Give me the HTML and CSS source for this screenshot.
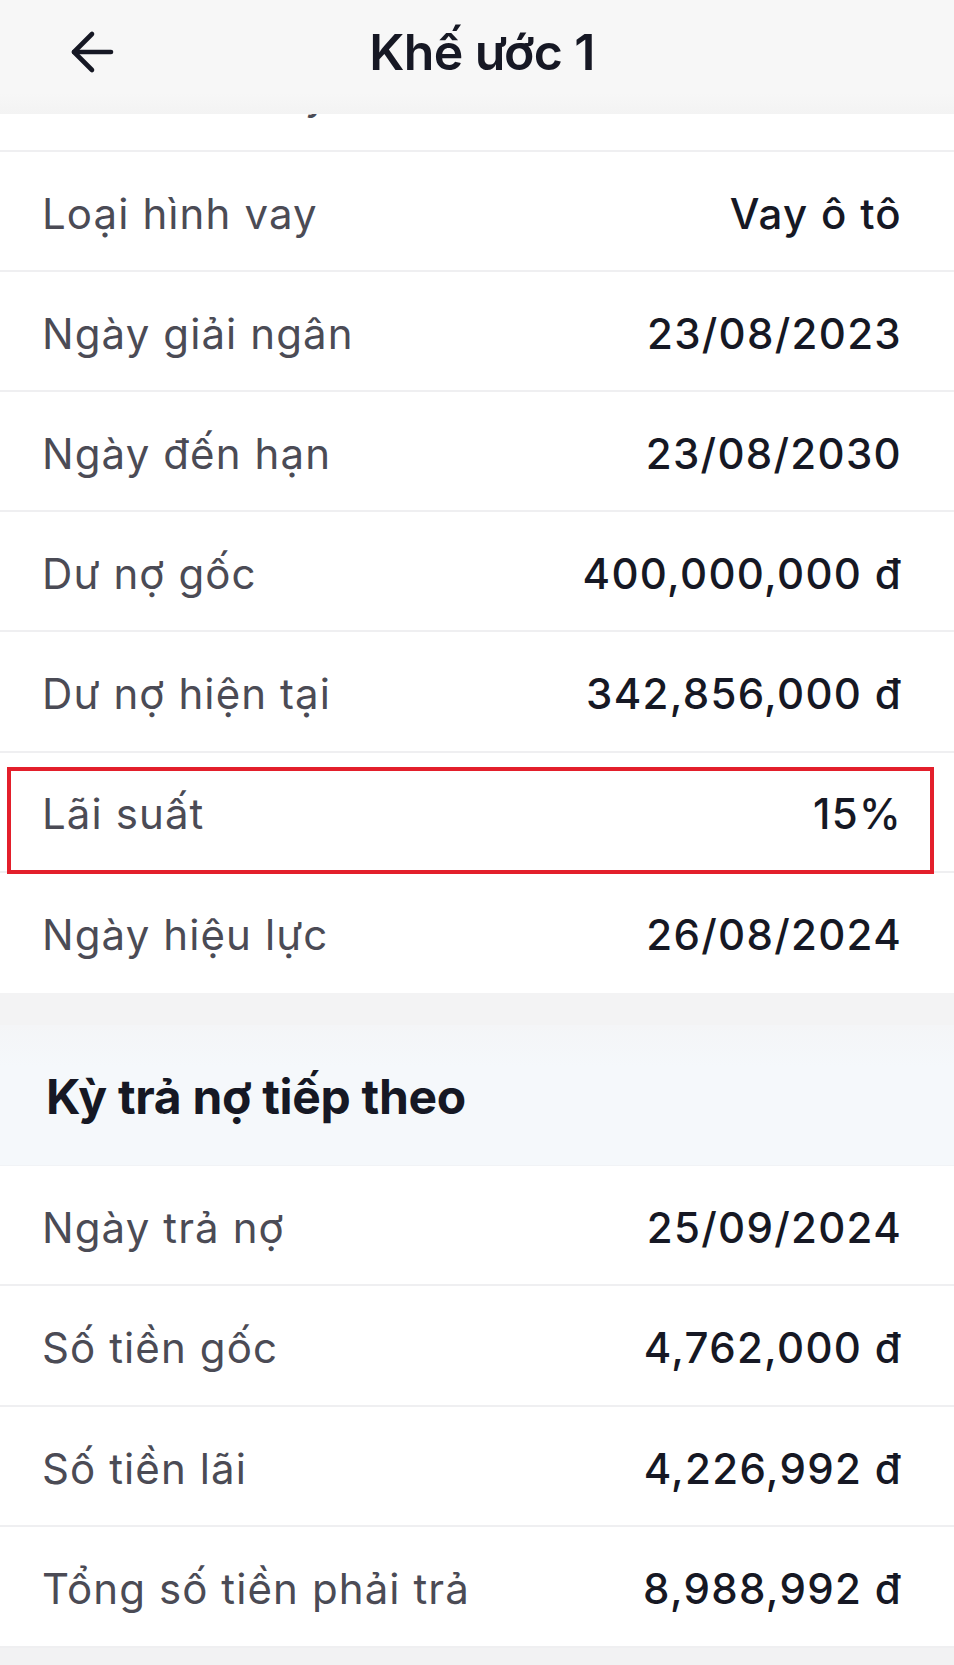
FILE: index.html
```html
<!DOCTYPE html>
<html lang="vi">
<head>
<meta charset="utf-8">
<title>Khế ước 1</title>
<link rel="stylesheet" href="styles.css">
</head>
<body>
<div class="screen">
  <header class="topbar">
    <button class="back" aria-label="Quay lại">
      <svg viewBox="0 0 44 44" width="44" height="44" fill="none" stroke="#161824" stroke-width="4.6" stroke-linecap="round" stroke-linejoin="round">
        <path d="M41 22H4"/>
        <path d="M22 4L4 22L22 40"/>
      </svg>
    </button>
    <h1 class="title">Khế ước 1</h1>
    <span></span>
  </header>

  <main class="viewport">
    <div class="list">
      <section class="group">
        <div class="row"><span class="label">Hình thức vay</span><span class="value">Cá nhân</span></div>
        <div class="row"><span class="label">Loại hình vay</span><span class="value">Vay ô tô</span></div>
        <div class="row"><span class="label">Ngày giải ngân</span><span class="value">23/08/2023</span></div>
        <div class="row"><span class="label">Ngày đến hạn</span><span class="value">23/08/2030</span></div>
        <div class="row"><span class="label">Dư nợ gốc</span><span class="value">400,000,000 đ</span></div>
        <div class="row"><span class="label">Dư nợ hiện tại</span><span class="value">342,856,000 đ</span></div>
        <div class="row marked"><span class="label">Lãi suất</span><span class="value">15%</span><span class="mark"></span></div>
        <div class="row last"><span class="label">Ngày hiệu lực</span><span class="value">26/08/2024</span></div>
      </section>

      <div class="spacer"></div>

      <section class="group next">
        <h2 class="group-title">Kỳ trả nợ tiếp theo</h2>
        <div class="row"><span class="label">Ngày trả nợ</span><span class="value">25/09/2024</span></div>
        <div class="row"><span class="label">Số tiền gốc</span><span class="value">4,762,000 đ</span></div>
        <div class="row"><span class="label">Số tiền lãi</span><span class="value">4,226,992 đ</span></div>
        <div class="row"><span class="label">Tổng số tiền phải trả</span><span class="value">8,988,992 đ</span></div>
      </section>
    </div>
  </main>
</div>
</body>
</html>
```

FILE: styles.css
```css
* {
  box-sizing: border-box;
}

html,
body {
  margin: 0;
  padding: 0;
  background: #f2f2f3;
}

body {
  font-family: Inter, "Noto Sans", "DejaVu Sans", sans-serif;
  color: #161824;
}

.screen {
  width: 954px;
  height: 1665px;
  display: flex;
  flex-direction: column;
  overflow: hidden;
  background: #f2f2f3;
}

/* top navigation bar */
.topbar {
  flex: 0 0 114px;
  display: grid;
  grid-template-columns: 1fr auto 1fr;
  align-items: center;
  background: linear-gradient(#f7f7f7 82%, #f3f3f3);
  padding-bottom: 10px;
}

.back {
  justify-self: start;
  margin-left: 70px;
  padding: 0;
  border: 0;
  background: none;
  display: flex;
}

.title {
  margin: 0;
  font-size: 50px;
  font-weight: 600;
  letter-spacing: -0.6px;
  color: #161824;
  padding-left: 10px;
}

/* scrolled content under the bar */
.viewport {
  flex: 1;
  overflow: hidden;
}

.list {
  margin-top: -82px;
}

.group {
  background: #ffffff;
}

.row {
  position: relative;
  height: 120.1px;
  display: flex;
  align-items: center;
  justify-content: space-between;
  padding: 4px 52px 0 42px;
  border-bottom: 2px solid #efeff1;
}

.row.last {
  border-bottom: 0;
}

.label {
  font-size: 42px;
  font-weight: 400;
  letter-spacing: 1.1px;
  color: #4b4b55;
}

.value {
  font-size: 42px;
  font-weight: 500;
  letter-spacing: 1.3px;
  color: #161824;
}

/* highlight frame around a row */
.mark {
  position: absolute;
  top: 14px;
  left: 7px;
  right: 20px;
  bottom: -3px;
  border: 4px solid #e31f2b;
  pointer-events: none;
}

.spacer {
  height: 32px;
  background: #f3f3f4;
}

.next .row {
  height: 120.5px;
}

.group-title {
  margin: 0;
  height: 141px;
  padding: 42px 0 0 46px;
  font-size: 48px;
  font-weight: 700;
  letter-spacing: -0.3px;
  color: #161824;
  background: linear-gradient(#f4f5f7, #f5f8fb 30%);
  border-bottom: 1px solid #f1f3f6;
}
```
